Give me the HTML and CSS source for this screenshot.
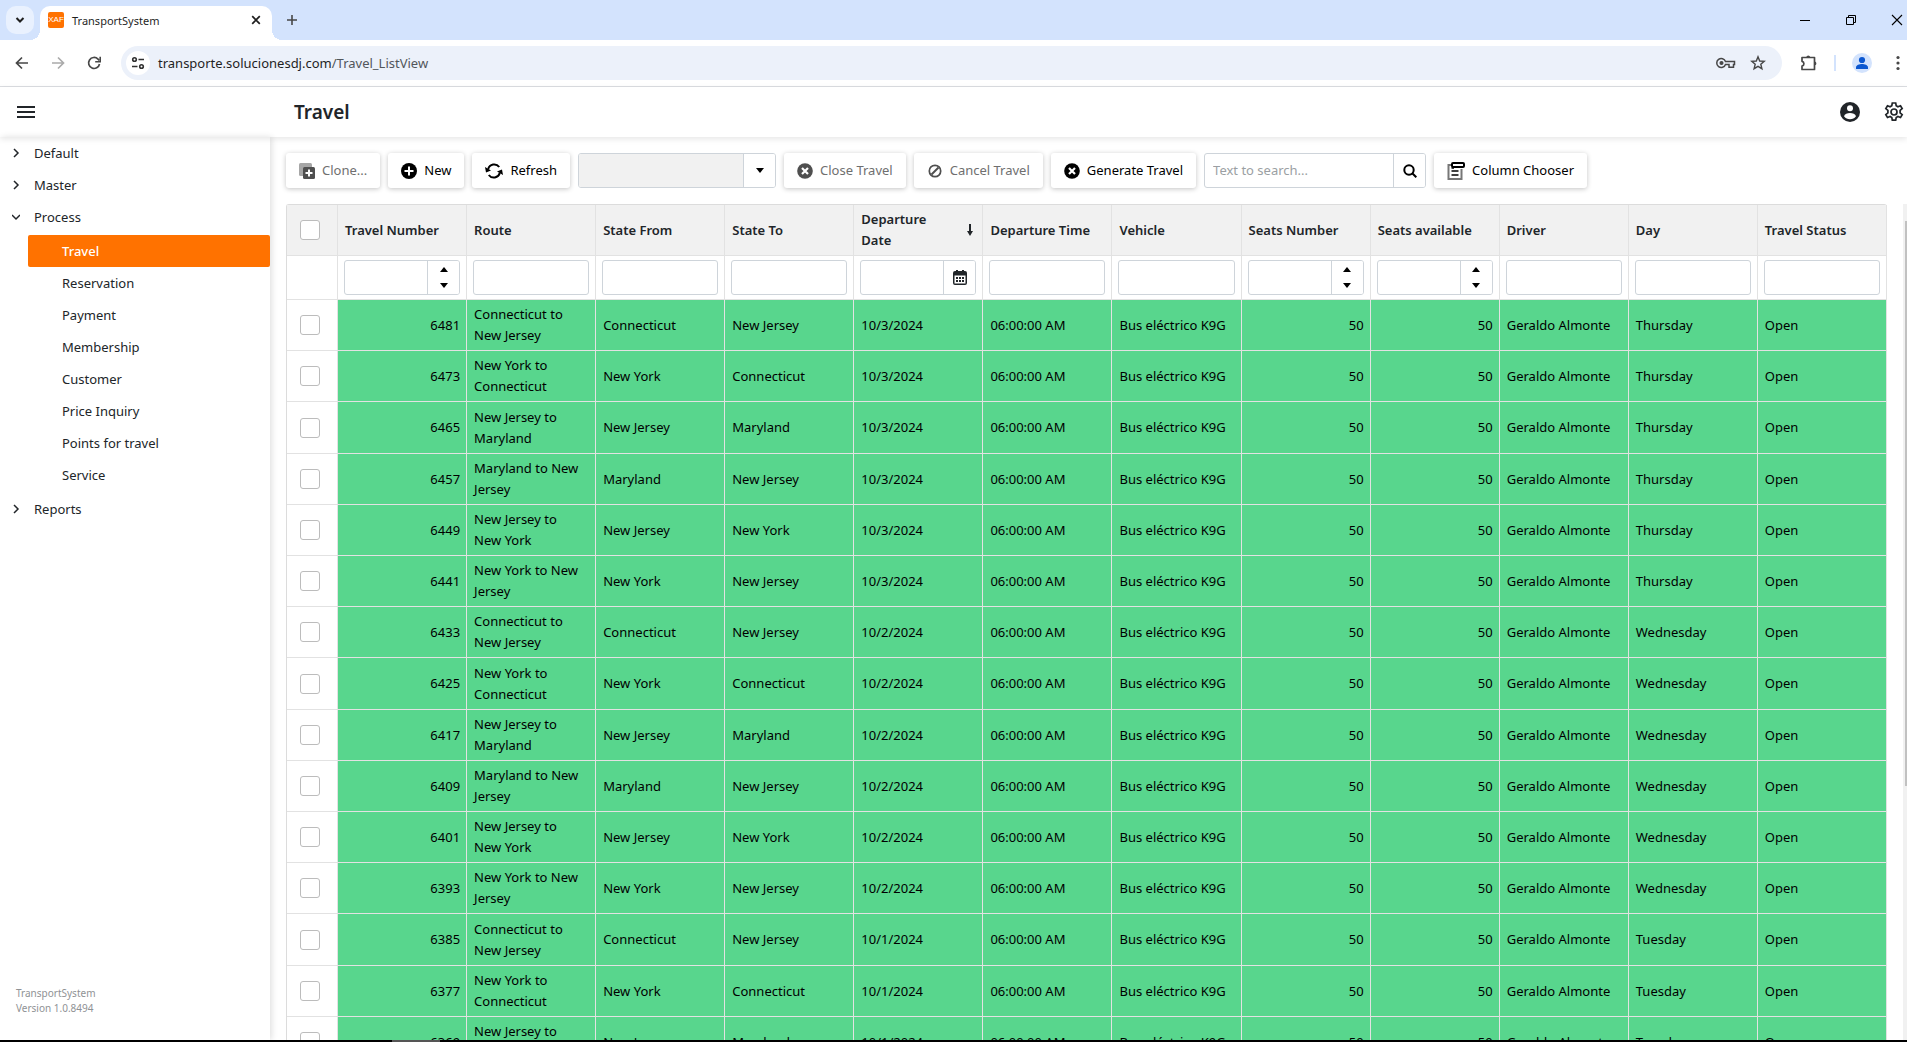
FILE: index.html
```html
<!DOCTYPE html>
<html lang="en">
<head>
<meta charset="utf-8">
<title>TransportSystem</title>
<link rel="stylesheet" href="styles.css">
</head>
<body>
<div class="tabstrip">
  <button class="tab-search" aria-label="Search tabs"><svg width="10" height="8" viewBox="0 0 10 8"><path d="M1.5 2 5 5.5 8.500 2" fill="none" stroke="#1f1f1f" stroke-width="2"/></svg></button>
  <div class="tab">
    <span class="favicon">XAF</span>
    <span class="tab-title">TransportSystem</span>
    <button class="plain" aria-label="Close tab"><svg width="10" height="10" viewBox="0 0 10 10"><path d="M1.200 1.200 8.800 8.800M8.800 1.200 1.200 8.800" stroke="#1f1f1f" stroke-width="1.700"/></svg></button>
  </div>
  <button class="plain new-tab" aria-label="New tab"><svg width="12" height="12" viewBox="0 0 12 12"><path d="M6 1v10M1 6h10" stroke="#474747" stroke-width="1.600"/></svg></button>
  <div class="window-buttons">
    <button class="plain" aria-label="Minimize"><svg width="12" height="12" viewBox="0 0 12 12"><path d="M1 6.500h10" stroke="#000"/></svg></button>
    <button class="plain" aria-label="Restore"><svg width="12" height="12" viewBox="0 0 12 12"><path d="M1.500 3.500h7v7h-7zM3.500 3.500v-2h7v7h-2" fill="none" stroke="#000"/></svg></button>
    <button class="plain" aria-label="Close"><svg width="12" height="12" viewBox="0 0 12 12"><path d="M1 1 11 11M11 1 1 11" stroke="#000" stroke-width="1.100"/></svg></button>
  </div>
</div>
<div class="address-row">
  <div class="nav-buttons">
    <button class="plain" aria-label="Back"><svg width="14" height="14" viewBox="0 0 14 14"><path d="M13 7H2M7 1.500 1.500 7 7 12.500" fill="none" stroke="#474747" stroke-width="1.700"/></svg></button>
    <button class="plain" aria-label="Forward"><svg width="14" height="14" viewBox="0 0 14 14"><path d="M1 7h11M7 1.500 12.500 7 7 12.500" fill="none" stroke="#ababab" stroke-width="1.700"/></svg></button>
    <button class="plain" aria-label="Reload"><svg width="14" height="14" viewBox="0 0 14 14"><path d="M12.500 8A5.500 5.500 0 1 1 11 3.100L12.300 4.400" fill="none" stroke="#474747" stroke-width="1.700"/><path d="M13.200.8v5H8.200" fill="none" stroke="#474747" stroke-width="1.600"/></svg></button>
  </div>
  <div class="omnibox">
    <span class="site-info"><svg width="14" height="14" viewBox="0 0 14 14" fill="none" stroke="#303030" stroke-width="1.600"><circle cx="3.500" cy="3.500" r="1.800"/><path d="M7.500 3.500H13M1 10.500h5.500"/><circle cx="10.500" cy="10.500" r="1.800"/></svg></span>
    <span class="url">transporte.solucionesdj.com<span class="path">/Travel_ListView</span></span>
    <svg width="20" height="12" viewBox="0 0 20 12" fill="none" stroke="#474747" stroke-width="1.500"><path d="M9.500 4.500A4.500 4.500 0 1 0 9.500 7.500H13v2.700h4.500V7.500H18.500V4.500z"/><circle cx="5.500" cy="6" r="1.300" fill="#474747"/></svg>
    <svg width="16" height="16" viewBox="0 0 16 16" fill="none" stroke="#474747" stroke-width="1.400"><path d="M8 1.800 9.700 6 14.200 6.300 10.800 9.200 11.900 13.700 8 11.300 4.100 13.700 5.200 9.200 1.800 6.300 6.300 6z"/></svg>
  </div>
  <div class="chrome-tools">
    <svg width="18" height="18" viewBox="0 0 18 18" fill="none" stroke="#474747" stroke-width="1.700"><path d="M2 3.500H14.500V15.500H2V12A2.400 2.400 0 0 0 2 7.300z" stroke-linejoin="round"/><path d="M6.300 3A2 2 0 0 1 10.200 3zM15 7.500A2 2 0 0 1 15 11.300z" fill="#474747" stroke="none"/></svg>
    <span class="divider"></span>
    <svg width="20" height="20" viewBox="0 0 20 20"><circle cx="10" cy="10" r="10" fill="#d3e3fd"/><circle cx="10" cy="7" r="3.100" fill="#0b57d0"/><path d="M4 16v-1.600c0-2.200 3.500-3.400 6-3.400s6 1.200 6 3.400V16z" fill="#0b57d0"/></svg>
    <svg width="4" height="16" viewBox="0 0 4 16" fill="#474747"><circle cx="2" cy="2.500" r="1.600"/><circle cx="2" cy="8" r="1.600"/><circle cx="2" cy="13.500" r="1.600"/></svg>
  </div>
</div>
<header class="app-header">
  <div class="menu-slot"><button class="plain" aria-label="Menu"><svg width="18" height="12" viewBox="0 0 18 12"><path d="M0 1h18M0 6h18M0 11h18" stroke="#212529" stroke-width="2"/></svg></button></div>
  <h1>Travel</h1>
  <div class="header-tools">
    <button class="plain" aria-label="Account"><svg width="20" height="20" viewBox="0 0 20 20"><circle cx="10" cy="10" r="10" fill="#212529"/><circle cx="10" cy="6.200" r="3" fill="#fff"/><path d="M4 14.200C4.500 12 7.500 11 10 11s5.500 1 6 3.200A7.300 7.300 0 0 1 4 14.200z" fill="#fff"/></svg></button>
    <button class="plain" aria-label="Settings"><svg width="20" height="20" viewBox="0 0 20 20" fill="none" stroke="#212529" stroke-width="1.700"><path d="M8.300 1h3.400l.5 2.700 1.700 1 2.600-1 1.700 2.900-2.100 1.800v2.400l2.100 1.800-1.700 2.900-2.600-1-1.700 1-.5 2.700H8.300l-.5-2.700-1.700-1-2.600 1-1.700-2.900 2.100-1.800V8.400L1.800 6.600l1.700-2.900 2.600 1 1.700-1z"/><circle cx="10" cy="10" r="3"/></svg></button>
  </div>
</header>
<div class="app-body">
  <nav class="sidebar">
    <ul class="nav-groups">
      <li><a class="group" href="#"><svg width="8" height="10" viewBox="0 0 8 10"><path d="M2 1 6 5 2 9"/></svg>Default</a></li>
      <li><a class="group" href="#"><svg width="8" height="10" viewBox="0 0 8 10"><path d="M2 1 6 5 2 9"/></svg>Master</a></li>
      <li><a class="group" href="#"><svg width="8" height="10" viewBox="0 0 8 10"><path d="M0 3 4 7 8 3"/></svg>Process</a>
        <ul class="nav-items">
          <li><a class="active" href="#">Travel</a></li>
          <li><a href="#">Reservation</a></li>
          <li><a href="#">Payment</a></li>
          <li><a href="#">Membership</a></li>
          <li><a href="#">Customer</a></li>
          <li><a href="#">Price Inquiry</a></li>
          <li><a href="#">Points for travel</a></li>
          <li><a href="#">Service</a></li>
        </ul>
      </li>
      <li><a class="group" href="#"><svg width="8" height="10" viewBox="0 0 8 10"><path d="M2 1 6 5 2 9"/></svg>Reports</a></li>
    </ul>
    <p class="version">TransportSystem<br>Version 1.0.8494</p>
  </nav>
  <main>
    <div class="toolbar">
      <button class="btn" disabled><svg width="16" height="16" viewBox="0 0 16 16"><rect width="13" height="13" rx="1.500" fill="#a6a6a6"/><rect x="4" y="4" width="12" height="12" rx="1.500" fill="#4f4f4f"/><path d="M10 6.500v7M6.500 10h7" stroke="#fff" stroke-width="2"/></svg>Clone...</button>
      <button class="btn"><svg width="16" height="16" viewBox="0 0 16 16"><circle cx="8" cy="8" r="8"/><path d="M8 3.500v9M3.500 8h9" stroke="#fff" stroke-width="2"/></svg>New</button>
      <button class="btn"><svg width="18" height="16" viewBox="0 0 18 16"><path d="M3.200 6A6.200 6.200 0 0 1 14.200 4M14.800 10A6.200 6.200 0 0 1 3.800 12" fill="none" stroke="#000" stroke-width="2"/><path d="M0 4 1 9.500 6 7.500zM18 12 17 6.500 12 8.500z"/></svg>Refresh</button>
      <div class="field combo"><input type="text" aria-label="View variant" disabled><button aria-label="Open list"><svg width="8" height="5" viewBox="0 0 8 5"><path d="M0 0h8L4 5z"/></svg></button></div>
      <button class="btn" disabled><svg width="16" height="16" viewBox="0 0 16 16"><circle cx="8" cy="8" r="7.800" fill="#4f4f4f"/><path d="M5 5l6 6M11 5l-6 6" stroke="#fff" stroke-width="2.200"/></svg>Close Travel</button>
      <button class="btn" disabled><svg width="16" height="16" viewBox="0 0 16 16"><circle cx="8" cy="8" r="5.700" fill="none" stroke="#4f4f4f" stroke-width="1.700"/><path d="M4.500 11.500 11.500 4.500" stroke="#4f4f4f" stroke-width="2"/></svg>Cancel Travel</button>
      <button class="btn"><svg width="16" height="16" viewBox="0 0 16 16"><circle cx="8" cy="8" r="7.800"/><path d="M5 5l6 6M11 5l-6 6" stroke="#fff" stroke-width="2.200"/></svg>Generate Travel</button>
      <div class="field search"><input type="text" aria-label="Search" placeholder="Text to search..."><button aria-label="Search"><svg width="14" height="14" viewBox="0 0 14 14" fill="none" stroke="#000" stroke-width="2"><circle cx="6" cy="6" r="4.700"/><path d="M9 9l4.300 4.300"/></svg></button></div>
      <button class="btn"><svg width="18" height="18" viewBox="0 0 18 18" fill="none"><path d="M4 3H1.500V17h13V7" stroke="#777" stroke-width="2"/><path d="M4.500 9h7M4.500 13h7M4.500 6H7" stroke="#000" stroke-width="1.600"/><rect x="5" y="1" width="12" height="4" rx="1" stroke="#000" stroke-width="2"/></svg>Column Chooser</button>
    </div>
    <table>
      <colgroup><col class="select-col"><col span="12"></colgroup>
      <thead>
        <tr class="titles">
          <th><input type="checkbox" aria-label="Select all"></th><th>Travel Number</th><th>Route</th><th>State From</th><th>State To</th>
          <th><div class="sorted"><span>Departure Date</span><svg width="6" height="12" viewBox="0 0 6 12"><path d="M2 0h2v7h2L3 12 0 7h2z" fill="#212529"/></svg></div></th>
          <th>Departure Time</th><th>Vehicle</th><th>Seats Number</th><th>Seats available</th><th>Driver</th><th>Day</th><th>Travel Status</th>
        </tr>
        <tr class="filters">
          <td></td>
          <td><div class="field"><input type="text" aria-label="Filter travel number"><span class="spin"><button aria-label="Increase"><svg width="8" height="5" viewBox="0 0 8 5"><path d="M0 5h8L4 0z"/></svg></button><button aria-label="Decrease"><svg width="8" height="5" viewBox="0 0 8 5"><path d="M0 0h8L4 5z"/></svg></button></span></div></td>
          <td><div class="field"><input type="text" aria-label="Filter route"></div></td>
          <td><div class="field"><input type="text" aria-label="Filter state from"></div></td>
          <td><div class="field"><input type="text" aria-label="Filter state to"></div></td>
          <td><div class="field"><input type="text" aria-label="Filter departure date"><button aria-label="Open calendar"><svg width="14" height="16" viewBox="0 0 14 16"><path d="M2 1h1V0h2v1h4V0h2v1h1a2 2 0 0 1 2 2v10a2 2 0 0 1-2 2H2a2 2 0 0 1-2-2V3a2 2 0 0 1 2-2z" fill="#212529"/><path d="M1.500 5.500h11v8h-11z" fill="#fff"/><path d="M3 8h2M6 8h2M9 8h2M3 11h2M6 11h2M9 11h2" stroke="#212529" stroke-width="2"/></svg></button></div></td>
          <td><div class="field"><input type="text" aria-label="Filter departure time"></div></td>
          <td><div class="field"><input type="text" aria-label="Filter vehicle"></div></td>
          <td><div class="field"><input type="text" aria-label="Filter seats number"><span class="spin"><button aria-label="Increase"><svg width="8" height="5" viewBox="0 0 8 5"><path d="M0 5h8L4 0z"/></svg></button><button aria-label="Decrease"><svg width="8" height="5" viewBox="0 0 8 5"><path d="M0 0h8L4 5z"/></svg></button></span></div></td>
          <td><div class="field"><input type="text" aria-label="Filter seats available"><span class="spin"><button aria-label="Increase"><svg width="8" height="5" viewBox="0 0 8 5"><path d="M0 5h8L4 0z"/></svg></button><button aria-label="Decrease"><svg width="8" height="5" viewBox="0 0 8 5"><path d="M0 0h8L4 5z"/></svg></button></span></div></td>
          <td><div class="field"><input type="text" aria-label="Filter driver"></div></td>
          <td><div class="field"><input type="text" aria-label="Filter day"></div></td>
          <td><div class="field"><input type="text" aria-label="Filter travel status"></div></td>
        </tr>
      </thead>
      <tbody>
        <tr><td><input type="checkbox" aria-label="Select 6481"></td><td>6481</td><td>Connecticut to New Jersey</td><td>Connecticut</td><td>New Jersey</td><td>10/3/2024</td><td>06:00:00 AM</td><td>Bus eléctrico K9G</td><td>50</td><td>50</td><td>Geraldo Almonte</td><td>Thursday</td><td>Open</td></tr>
        <tr><td><input type="checkbox" aria-label="Select 6473"></td><td>6473</td><td>New York to Connecticut</td><td>New York</td><td>Connecticut</td><td>10/3/2024</td><td>06:00:00 AM</td><td>Bus eléctrico K9G</td><td>50</td><td>50</td><td>Geraldo Almonte</td><td>Thursday</td><td>Open</td></tr>
        <tr><td><input type="checkbox" aria-label="Select 6465"></td><td>6465</td><td>New Jersey to Maryland</td><td>New Jersey</td><td>Maryland</td><td>10/3/2024</td><td>06:00:00 AM</td><td>Bus eléctrico K9G</td><td>50</td><td>50</td><td>Geraldo Almonte</td><td>Thursday</td><td>Open</td></tr>
        <tr><td><input type="checkbox" aria-label="Select 6457"></td><td>6457</td><td>Maryland to New Jersey</td><td>Maryland</td><td>New Jersey</td><td>10/3/2024</td><td>06:00:00 AM</td><td>Bus eléctrico K9G</td><td>50</td><td>50</td><td>Geraldo Almonte</td><td>Thursday</td><td>Open</td></tr>
        <tr><td><input type="checkbox" aria-label="Select 6449"></td><td>6449</td><td>New Jersey to New&nbsp;York</td><td>New Jersey</td><td>New York</td><td>10/3/2024</td><td>06:00:00 AM</td><td>Bus eléctrico K9G</td><td>50</td><td>50</td><td>Geraldo Almonte</td><td>Thursday</td><td>Open</td></tr>
        <tr><td><input type="checkbox" aria-label="Select 6441"></td><td>6441</td><td>New York to New Jersey</td><td>New York</td><td>New Jersey</td><td>10/3/2024</td><td>06:00:00 AM</td><td>Bus eléctrico K9G</td><td>50</td><td>50</td><td>Geraldo Almonte</td><td>Thursday</td><td>Open</td></tr>
        <tr><td><input type="checkbox" aria-label="Select 6433"></td><td>6433</td><td>Connecticut to New Jersey</td><td>Connecticut</td><td>New Jersey</td><td>10/2/2024</td><td>06:00:00 AM</td><td>Bus eléctrico K9G</td><td>50</td><td>50</td><td>Geraldo Almonte</td><td>Wednesday</td><td>Open</td></tr>
        <tr><td><input type="checkbox" aria-label="Select 6425"></td><td>6425</td><td>New York to Connecticut</td><td>New York</td><td>Connecticut</td><td>10/2/2024</td><td>06:00:00 AM</td><td>Bus eléctrico K9G</td><td>50</td><td>50</td><td>Geraldo Almonte</td><td>Wednesday</td><td>Open</td></tr>
        <tr><td><input type="checkbox" aria-label="Select 6417"></td><td>6417</td><td>New Jersey to Maryland</td><td>New Jersey</td><td>Maryland</td><td>10/2/2024</td><td>06:00:00 AM</td><td>Bus eléctrico K9G</td><td>50</td><td>50</td><td>Geraldo Almonte</td><td>Wednesday</td><td>Open</td></tr>
        <tr><td><input type="checkbox" aria-label="Select 6409"></td><td>6409</td><td>Maryland to New Jersey</td><td>Maryland</td><td>New Jersey</td><td>10/2/2024</td><td>06:00:00 AM</td><td>Bus eléctrico K9G</td><td>50</td><td>50</td><td>Geraldo Almonte</td><td>Wednesday</td><td>Open</td></tr>
        <tr><td><input type="checkbox" aria-label="Select 6401"></td><td>6401</td><td>New Jersey to New&nbsp;York</td><td>New Jersey</td><td>New York</td><td>10/2/2024</td><td>06:00:00 AM</td><td>Bus eléctrico K9G</td><td>50</td><td>50</td><td>Geraldo Almonte</td><td>Wednesday</td><td>Open</td></tr>
        <tr><td><input type="checkbox" aria-label="Select 6393"></td><td>6393</td><td>New York to New Jersey</td><td>New York</td><td>New Jersey</td><td>10/2/2024</td><td>06:00:00 AM</td><td>Bus eléctrico K9G</td><td>50</td><td>50</td><td>Geraldo Almonte</td><td>Wednesday</td><td>Open</td></tr>
        <tr><td><input type="checkbox" aria-label="Select 6385"></td><td>6385</td><td>Connecticut to New Jersey</td><td>Connecticut</td><td>New Jersey</td><td>10/1/2024</td><td>06:00:00 AM</td><td>Bus eléctrico K9G</td><td>50</td><td>50</td><td>Geraldo Almonte</td><td>Tuesday</td><td>Open</td></tr>
        <tr><td><input type="checkbox" aria-label="Select 6377"></td><td>6377</td><td>New York to Connecticut</td><td>New York</td><td>Connecticut</td><td>10/1/2024</td><td>06:00:00 AM</td><td>Bus eléctrico K9G</td><td>50</td><td>50</td><td>Geraldo Almonte</td><td>Tuesday</td><td>Open</td></tr>
        <tr><td><input type="checkbox" aria-label="Select 6369"></td><td>6369</td><td>New Jersey to Maryland</td><td>New Jersey</td><td>Maryland</td><td>10/1/2024</td><td>06:00:00 AM</td><td>Bus eléctrico K9G</td><td>50</td><td>50</td><td>Geraldo Almonte</td><td>Tuesday</td><td>Open</td></tr>
      </tbody>
    </table>
  </main>
  <div class="scrollbar"><div class="thumb"></div></div>
</div>
<div class="taskbar"><span></span></div>
</body>
</html>
```
FILE: styles.css
```css
* { box-sizing: border-box; }
body {
  margin: 0;
  height: 100vh;
  display: flex;
  flex-direction: column;
  overflow: hidden;
  background: #fff;
  color: #212529;
  font: 13px/21px "Noto Sans", "Open Sans", sans-serif;
}
button, input { font: inherit; color: inherit; margin: 0; padding: 0; }
svg { display: block; flex: none; }
ul { list-style: none; margin: 0; padding: 0; }
a { color: inherit; text-decoration: none; }
.plain { border: 0; background: none; display: flex; align-items: center; justify-content: center; }

/* Browser tab strip */
.tabstrip { flex: none; height: 40px; background: #d3e3fd; display: flex; align-items: flex-start; padding: 6px 4px 0 6px; }
.tab-search { width: 28px; height: 28px; border: 0; border-radius: 10px; background: #e9f1fe; display: flex; align-items: center; justify-content: center; }
.tab { margin-left: 6px; width: 232px; height: 34px; border-radius: 10px 10px 0 0; background: #fff; display: flex; align-items: center; padding: 0 11px 6px 8px; font-size: 11px; position: relative; }
.tab::before, .tab::after { content: ""; position: absolute; bottom: 0; width: 10px; height: 10px; }
.tab::before { left: -10px; background: radial-gradient(circle at 0 0, transparent 10px, #fff 10px); }
.tab::after { right: -10px; background: radial-gradient(circle at 100% 0, transparent 10px, #fff 10px); }
.favicon { width: 16px; height: 16px; border-radius: 2px; background: #ff7200; color: #fff; font: 8px/16px "Liberation Sans", sans-serif; text-align: center; }
.tab-title { flex: 1; margin-left: 8px; color: #1f1f1f; }
.new-tab { margin: 8px 0 0 14px; }
.window-buttons { margin: 8px 0 0 auto; display: flex; gap: 34px; }

/* Address row */
.address-row { flex: none; height: 47px; border-bottom: 1px solid #dcdee2; display: flex; align-items: center; padding: 0 7px 0 15px; }
.nav-buttons { display: flex; gap: 22px; margin-right: 20px; }
.omnibox { flex: 1; height: 34px; border-radius: 17px; background: #ecf1fa; display: flex; align-items: center; padding: 0 16px 0 5px; gap: 14px; }
.site-info { width: 24px; height: 24px; border-radius: 12px; background: #fff; display: flex; align-items: center; justify-content: center; }
.url { flex: 1; margin-left: -6px; color: #1f1f1f; }
.path { color: #52565b; }
.chrome-tools { display: flex; align-items: center; gap: 16px; margin-left: 18px; }
.divider { width: 2px; height: 16px; background: #d3e3fd; }
.chrome-tools .divider + svg { margin-right: 8px; }

/* Application header */
.app-header { flex: none; height: 50px; display: flex; align-items: center; box-shadow: 0 2px 6px rgba(0, 0, 0, .1); z-index: 1; padding-right: 3px; }
.menu-slot { width: 270px; padding-left: 17px; }
h1 { margin: 0 auto 0 24px; font-size: 19px; line-height: 28px; font-weight: 600; }
.header-tools { display: flex; gap: 24px; }

.app-body { flex: 1; min-height: 0; display: flex; }
.sidebar { flex: none; width: 270px; display: flex; flex-direction: column; box-shadow: 2px 0 6px rgba(0, 0, 0, .12); }
.sidebar a { display: flex; align-items: center; height: 32px; }
.group { padding-left: 12px; gap: 14px; }
.group svg { fill: none; stroke: #212529; stroke-width: 1.5; }
.nav-items { margin: 2px 0 2px 28px; }
.nav-items a { padding-left: 34px; }
.nav-items .active { background: #ff7200; color: #fff; border-radius: 2px; font-weight: 500; }
.version { margin: auto 0 24px 16px; font-size: 10px; line-height: 15px; color: #8f9295; }

main { flex: 1; min-width: 0; padding: 16px 16px 0; overflow: hidden; }
.toolbar { display: flex; gap: 8px; margin-bottom: 16px; }
.btn { height: 35px; padding: 0 13px; border: 0; border-radius: 3px; background: #fff; color: #000; box-shadow: 0 1px 5px rgba(0, 0, 0, .24); display: flex; align-items: center; gap: 7px; white-space: nowrap; }
.btn:disabled { color: #6f6f6f; }
.field { display: flex; height: 35px; border: 1px solid #ced4da; border-radius: 3px; background: #fff; overflow: hidden; }
.field input { flex: 1; min-width: 0; width: 0; border: 0; padding: 0 8px; background: none; outline: 0; }
.field input:disabled { background: #f1f1f1; }
.field input::placeholder { color: #9b9fa3; }
.field > button, .spin { flex: none; width: 32px; border: 0; border-left: 1px solid #ced4da; background: #fff; display: flex; align-items: center; justify-content: center; }
.spin { flex-direction: column; }
.spin button { flex: 1; border: 0; background: none; }
.combo { width: 198px; }
.search { width: 222px; }

/* Travel grid */
table { width: 100%; table-layout: fixed; border-collapse: separate; border-spacing: 0; border: 1px solid #dcdcdc; border-width: 1px 0 0 1px; border-radius: 3px; }
.select-col { width: 51px; }
th, td { border: 1px solid #e2e2e2; border-width: 0 1px 1px 0; padding: 4px 6px 4px 7px; text-align: left; }
th { height: 51px; background: #f1f1f1; font-weight: 600; }
.sorted { display: flex; align-items: center; justify-content: space-between; gap: 16px; padding-right: 3px; }
.filters td { height: 44px; padding: 4px 6px; }
tbody td { height: 51px; background: #58d68d; color: #000; }
tbody tr:nth-child(5n + 3) td { height: 52px; }
tr td:first-child { background: #fff; }
tbody td:nth-child(2), tbody td:nth-child(9), tbody td:nth-child(10) { text-align: right; }
th:first-child, td:first-child { padding: 0 13px; }
input[type="checkbox"] { appearance: none; display: block; width: 20px; height: 20px; border: 1px solid #bcbcbc; border-radius: 3px; background: #fff; }

.scrollbar { flex: none; width: 4px; margin-top: 67px; background: #f1f1f1; padding: 17px 0 0 2px; }
.thumb { height: 69%; background: #c1c1c1; }
.taskbar { flex: none; height: 2px; background: #000; padding-left: 392px; }
.taskbar span { display: block; width: 48px; height: 2px; background: #555; }
```
